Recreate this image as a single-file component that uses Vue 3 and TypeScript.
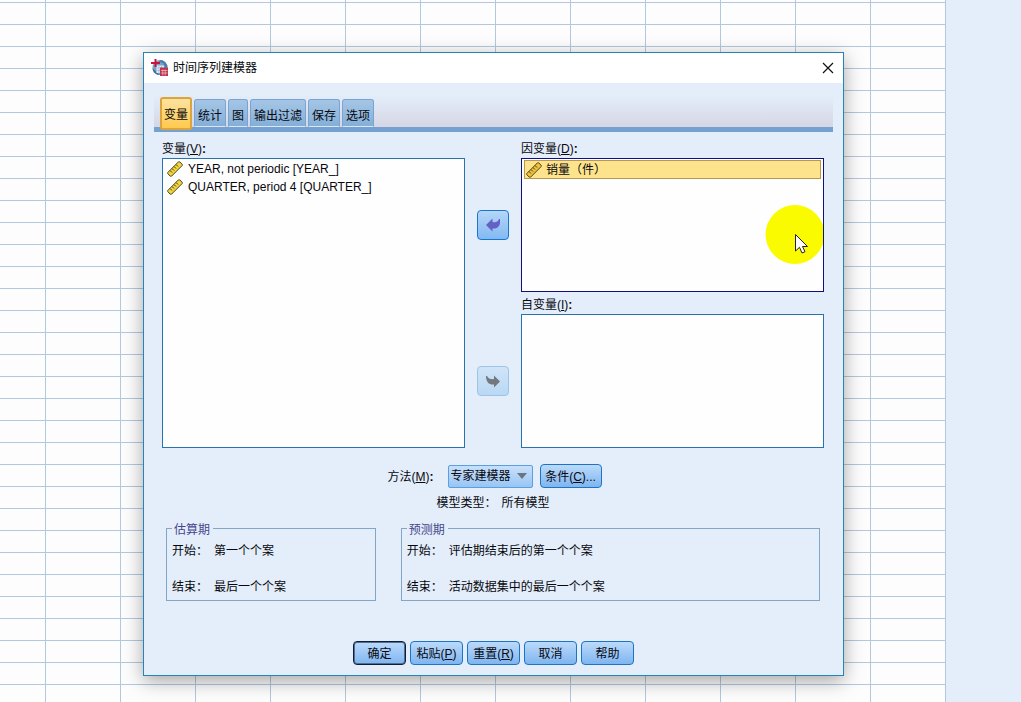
<script setup lang="ts">
import { ref } from 'vue'

interface Caption {
  text: string
  key?: string
}

interface Period {
  title: string
  start: string
  end: string
}

const tabs: string[] = ['变量', '统计', '图', '输出过滤', '保存', '选项']
const activeTab = ref('变量')
const variables: string[] = ['YEAR, not periodic [YEAR_]', 'QUARTER, period 4 [QUARTER_]']
const dependents: string[] = ['销量（件）']
const method = ref('专家建模器')
const periods: Period[] = [
  { title: '估算期', start: '第一个个案', end: '最后一个个案' },
  { title: '预测期', start: '评估期结束后的第一个个案', end: '活动数据集中的最后一个个案' },
]
const actions: Caption[] = [
  { text: '确定' },
  { text: '粘贴', key: 'P' },
  { text: '重置', key: 'R' },
  { text: '取消' },
  { text: '帮助' },
]
</script>

<template>
  <div class="desktop">
    <div class="sheet"></div>
    <div class="side"></div>

    <section class="dialog" role="dialog" aria-labelledby="dialog-title">
      <header class="titlebar">
        <svg class="logo" viewBox="0 0 18 18" aria-hidden="true">
          <circle cx="9" cy="8.500" r="7.500" fill="#76a5cb" />
          <path d="M9 1a7.500 7.500 0 0 1 7.500 7.500H14L12 4 8 3z" fill="#4c80ac" />
          <path d="M1.500 9c2 2 4 4 7.500 7C4.500 16 1.500 13 1.500 9z" fill="#3f6f9f" />
          <path d="M5.500 6.500H13V14H5.500z" fill="#e4eef6" />
          <path d="M5.500 9H13M5.500 11.500H13M8 6.500V14M10.500 6.500V14" stroke="#8fb4d2" stroke-width=".7" />
          <path d="M4.500 0v8M0 4h9" stroke="#cc1238" stroke-width="2" />
          <path d="M9 8.500h8V17H9z" fill="#bf3350" />
          <path d="M10 11.500h6.500M10 14h6.500M11.800 10.500v6M14.200 10.500v6" stroke="#f0c2cc" stroke-width=".7" />
        </svg>
        <h1 id="dialog-title">时间序列建模器</h1>
        <button class="close" type="button" aria-label="关闭">
          <svg viewBox="0 0 12 12" aria-hidden="true"><path d="M1 1l10 10M11 1L1 11" stroke="#111" stroke-width="1.2" /></svg>
        </button>
      </header>

      <div class="body">
        <nav class="tabs" role="tablist">
          <button
            v-for="tab in tabs"
            :key="tab"
            type="button"
            role="tab"
            class="tab"
            :class="{ active: tab === activeTab }"
            :aria-selected="tab === activeTab"
            @click="activeTab = tab"
          >{{ tab }}</button>
        </nav>

        <div class="panel">
          <div class="pickers">
            <div class="column">
              <div id="label-vars" class="label">变量(<u>V</u>)<b>:</b></div>
              <ul class="list" role="listbox" aria-labelledby="label-vars">
                <li v-for="item in variables" :key="item" class="item" role="option">
                  <svg class="ruler" viewBox="0 0 16 16" aria-hidden="true">
                    <path d="M.8 11.500L11.500 .8h1.200l2.500 2.500v1.200L4.500 15.200H3.300L.8 12.700z" fill="#f0d53c" stroke="#4a4320" />
                    <path d="M3 9.500l2 2M5 7.500l2 2M7 5.500l2 2M9 3.500l2 2" stroke="#4a4320" />
                  </svg>
                  <span>{{ item }}</span>
                </li>
              </ul>
            </div>

            <div class="movers">
              <button class="mover" type="button" aria-label="移回变量">
                <svg viewBox="0 0 16 16" aria-hidden="true"><path d="M1 8l6.500-6.500V5c3 .8 5.500 0 6.500-3h1v4c-.5 4-3.500 6-7.500 5.500V14.500z" fill="#6560c4" /></svg>
              </button>
              <button class="mover off" type="button" disabled aria-label="移至自变量">
                <svg viewBox="0 0 16 16" aria-hidden="true"><path d="M15 8.500L9 14.500v-3C4.500 12 1 9.500 1 3h1c1.500 2.800 4 3.500 7 3V2.500z" fill="#74787c" /></svg>
              </button>
            </div>

            <div class="column">
              <div id="label-dep" class="label">因变量(<u>D</u>)<b>:</b></div>
              <ul class="list focused" role="listbox" aria-labelledby="label-dep">
                <li v-for="item in dependents" :key="item" class="item selected" role="option" aria-selected="true">
                  <svg class="ruler" viewBox="0 0 16 16" aria-hidden="true">
                    <path d="M.8 11.500L11.500 .8h1.200l2.500 2.500v1.200L4.500 15.200H3.300L.8 12.700z" fill="#efc23c" stroke="#4a4320" />
                    <path d="M3 9.500l2 2M5 7.500l2 2M7 5.500l2 2M9 3.500l2 2" stroke="#4a4320" />
                  </svg>
                  <span>{{ item }}</span>
                </li>
                <li class="pointer" role="presentation">
                  <svg viewBox="-1 0 58 59" aria-hidden="true">
                    <circle cx="29" cy="29.500" r="29.500" fill="#fbfb00" />
                    <path d="M29.500 29.500v16.500l4-3.700 2.500 5.700 3-1.300-2.500-5.200h5z" fill="#fff" stroke="#2b1c1c" />
                  </svg>
                </li>
              </ul>
              <div id="label-ind" class="label second">自变量(<u>I</u>)<b>:</b></div>
              <ul class="list" role="listbox" aria-labelledby="label-ind"></ul>
            </div>
          </div>

          <div class="method">
            <label class="label" for="method">方法(<u>M</u>)<b>:</b></label>
            <span class="combo">
              <select id="method" v-model="method">
                <option>专家建模器</option>
              </select>
              <svg viewBox="0 0 10 6" aria-hidden="true"><path d="M0 0h10L5 6z" fill="#6d7480" /></svg>
            </span>
            <button class="btn criteria" type="button">条件(<u>C</u>)...</button>
          </div>
          <div class="model"><span>模型类型：</span><span>所有模型</span></div>

          <div class="periods">
            <fieldset v-for="p in periods" :key="p.title">
              <legend>{{ p.title }}</legend>
              <dl>
                <dt>开始：</dt>
                <dd>{{ p.start }}</dd>
                <dt>结束：</dt>
                <dd>{{ p.end }}</dd>
              </dl>
            </fieldset>
          </div>
        </div>

        <footer class="actions">
          <button v-for="(a, i) in actions" :key="a.text" class="btn" :class="{ primary: i === 0 }" type="button">
            {{ a.text }}<template v-if="a.key">(<u>{{ a.key }}</u>)</template>
          </button>
        </footer>
      </div>
    </section>
  </div>
</template>

<style>
body {
  margin: 0;
}
</style>

<style scoped>
.desktop {
  display: grid;
  grid-template-columns: minmax(0, 1fr) 75px;
  min-height: 100vh;
  color: #08080e;
  font: 12px/20px "Liberation Sans", "Noto Sans CJK SC", sans-serif;
}
.desktop * {
  box-sizing: border-box;
}
button,
select {
  margin: 0;
  padding: 0;
  color: inherit;
  font: inherit;
}
.sheet {
  grid-area: 1 / 1;
  border-right: 1px solid #b2c8e0;
  background-color: #fdfdfd;
  background-image:
    linear-gradient(90deg, #b2c8e0 1px, transparent 1px),
    linear-gradient(#b2c8e0 1px, transparent 1px);
  background-size: 75px 22px;
  background-position: 45px 2px;
}
.side {
  grid-area: 1 / 2;
  background: #e3eefa;
}
.dialog {
  grid-area: 1 / 1 / 2 / 3;
  align-self: start;
  margin: 52px 177px 26px 143px;
  border: 1px solid #2584b8;
  background: #e3eefa;
  box-shadow: 0 5px 18px rgba(0, 0, 0, 0.35);
}
.titlebar {
  display: flex;
  align-items: center;
  height: 30px;
  padding: 0 8px 0 7px;
  background: #fff;
}
.logo {
  width: 18px;
  height: 18px;
}
h1 {
  flex: 1;
  margin: 0 0 0 4px;
  font-size: 12px;
  font-weight: 400;
}
.close {
  display: grid;
  place-items: center;
  width: 14px;
  height: 14px;
  border: 0;
  background: none;
}
.close svg {
  width: 12px;
  height: 12px;
}
.body {
  padding: 12px 10px 10px;
}
.tabs {
  display: flex;
  align-items: flex-end;
  gap: 2px;
  height: 37px;
  padding: 0 6px;
  border-bottom: 5px solid #75a1d0;
  background: linear-gradient(#e3eefa, #d6d6e4);
}
.tab {
  height: 28px;
  padding: 5px 3px 0;
  border: 1px solid #7ba3d0;
  border-bottom-color: #d9e6f4;
  border-radius: 3px 3px 0 0;
  background: linear-gradient(#a5c6e6, #84afd8);
  line-height: 20px;
}
.tab.active {
  z-index: 1;
  height: 33px;
  margin-bottom: -3px;
  padding: 2px 2px 0;
  border: 2px solid #dda43d;
  border-radius: 3px;
  background: linear-gradient(#fde3a0, #ffc94d);
}
.panel {
  padding: 6px 9px 0 8px;
}
.pickers {
  display: grid;
  grid-template-columns: minmax(0, 1fr) 56px minmax(0, 1fr);
}
.column {
  display: flex;
  flex-direction: column;
}
.label {
  height: 20px;
  line-height: 22px;
}
.label.second {
  margin-top: 2px;
}
.list {
  position: relative;
  flex: 1;
  min-height: 134px;
  margin: 0;
  padding: 1px;
  border: 1px solid #2873ad;
  background: #fefefe;
  list-style: none;
}
.list.focused {
  border-color: #101078;
}
.item {
  display: flex;
  align-items: center;
  gap: 5px;
  height: 18px;
  padding: 0 3px;
}
.item.selected {
  gap: 4px;
  height: 19px;
  margin-right: 1px;
  margin-left: 1px;
  padding: 0 1px;
  border: 1px solid #b89850;
  background: #fde48c;
}
.ruler {
  width: 16px;
  height: 16px;
}
.pointer {
  position: absolute;
  top: 46px;
  right: 0;
  width: 58px;
  height: 59px;
}
.pointer svg {
  display: block;
}
.movers {
  display: flex;
  flex-direction: column;
  align-items: center;
  gap: 126px;
  padding-top: 72px;
}
.mover {
  display: grid;
  place-items: center;
  width: 32px;
  height: 30px;
  border: 1px solid #1876cc;
  border-radius: 4px;
  background: linear-gradient(#b5d6f8, #83b9f2);
}
.mover.off {
  border-color: #9cc4e8;
  background: linear-gradient(#d0e4f8, #b9d8f4);
}
.mover svg {
  width: 16px;
  height: 16px;
}
.method {
  display: flex;
  align-items: center;
  justify-content: center;
  margin-top: 16px;
  padding-left: 3px;
}
.combo {
  position: relative;
  margin-right: 7px;
  margin-left: 14px;
}
.combo select {
  display: block;
  height: 23px;
  padding: 0 20px 0 2px;
  border: 1px solid #5a9fe0;
  border-radius: 2px;
  background: linear-gradient(#c8e0fa, #98c5f5);
  appearance: none;
}
.combo svg {
  position: absolute;
  top: 8px;
  right: 6px;
  width: 10px;
  height: 6px;
  pointer-events: none;
}
.btn {
  height: 24px;
  padding-top: 2px;
  border: 1px solid #1c74c4;
  border-radius: 4px;
  background: linear-gradient(#bcdafa, #7fb5f0);
}
.criteria {
  width: 62px;
}
.model {
  display: flex;
  justify-content: center;
  gap: 5px;
  margin-top: 5px;
}
.periods {
  display: grid;
  grid-template-columns: minmax(0, 1fr) minmax(0, 2fr);
  gap: 25px;
  margin: 7px 4px 0;
}
fieldset {
  min-width: 0;
  margin: 0;
  padding: 5px 5px 3px;
  border: 1px solid #84a6c6;
}
legend {
  height: 16px;
  padding: 0 3px 0 2px;
  color: #46468c;
}
dl {
  display: grid;
  grid-template-columns: auto 1fr;
  gap: 16px 6px;
  margin: 0;
}
dd {
  margin: 0;
}
.actions {
  display: flex;
  justify-content: center;
  gap: 4px;
  margin-top: 40px;
}
.actions .btn {
  width: 53px;
}
.btn.primary {
  border-color: #101c38;
  box-shadow: inset 0 0 0 1px #4f7096;
}
</style>
